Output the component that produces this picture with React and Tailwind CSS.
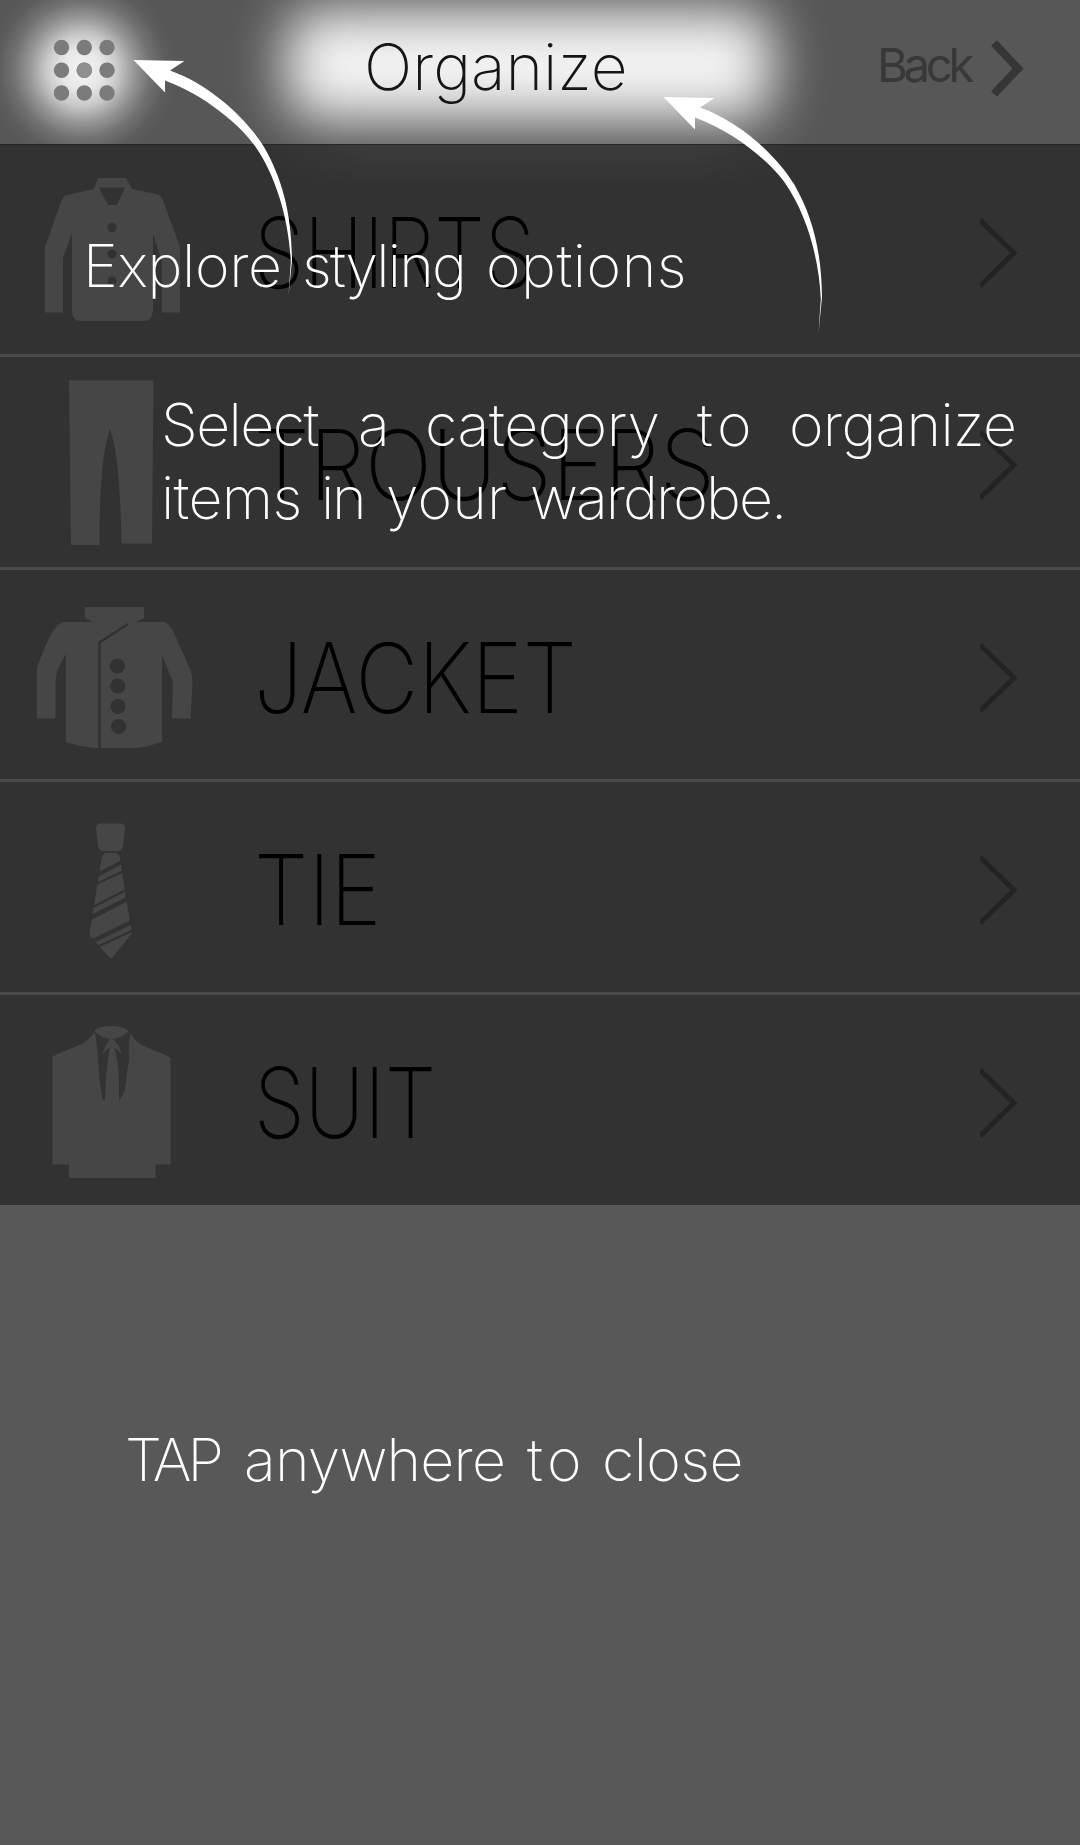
import React from 'react';

const Shirt = () => (
  <svg viewBox="0 145 220 209" className="h-[209px] w-[220px] shrink-0" fill="#464646">
    <path d="M98 178H126L132 189L156 194Q161 195 163 200L180 247V312.500H162V262L153 234V310Q152 321 145 321H80Q72 321 72 310V233L63 258V312.500H45V247L61 202Q63 196 67 195L94 189Z" />
    <path d="M99 187.500H125L117 205H108Z" fill="#323232" />
    <g fill="#323232">
      <circle cx="112" cy="227.500" r="4.500" />
      <circle cx="112" cy="254" r="4.500" />
      <circle cx="112" cy="281" r="4.500" />
    </g>
  </svg>
);

const Trousers = () => (
  <svg viewBox="0 357 220 209" className="h-[209px] w-[220px] shrink-0" fill="#464646">
    <path d="M69 380.500H153.500L152 543.500H121.500Q120 455 110 429Q99 460 99.500 545H71Z" />
  </svg>
);

const Jacket = () => (
  <svg viewBox="0 569 220 209" className="h-[209px] w-[220px] shrink-0" fill="#464646">
    <path d="M85 606H144V617L136 621H164Q169 622 174 632L190 668Q193 675 192.500 682L190.500 717.500H172L173 681L162 654V741Q150 745 137 747H98Q80 746 66 741V653Q56 668 55.500 680V717.500H37V667Q48 635 57 625Q61 621 65 621H93L85 617Z" />
    <path d="M99.500 748V641.500L128 623" fill="none" stroke="#323232" strokeWidth="2.600" />
    <g fill="#323232">
      <circle cx="117.300" cy="665" r="7.600" />
      <circle cx="117.800" cy="685" r="7.600" />
      <circle cx="118" cy="705.300" r="7.600" />
      <circle cx="118.500" cy="725.500" r="7.600" />
    </g>
  </svg>
);

const Tie = () => (
  <svg viewBox="0 782 220 209" className="h-[209px] w-[220px] shrink-0" fill="#464646">
    <path d="M100 823.500H121Q125.500 824 125 829L123 846Q122 851 118 851H103Q99 851 98 846L96 829Q96 824 100 823.500Z" />
    <path d="M106 853H115Q119 853 120 858L126 898L132 933L113 957Q111 959 109 957L90 936Q89 934 90 930L101 862Q102 854 106 853Z" />
    <g stroke="#323232" fill="none">
      <path d="M97 875L124 861" strokeWidth="4" />
      <path d="M94 885L125 870.500" strokeWidth="2.400" />
      <path d="M91 908L128 889" strokeWidth="2.400" />
      <path d="M89 918.500L130 897.500" strokeWidth="4.500" />
      <path d="M92 941.500L135 920.500" strokeWidth="4.200" />
      <path d="M95 948L135 929.500" strokeWidth="2.400" />
    </g>
  </svg>
);

const Suit = () => (
  <svg viewBox="0 995 220 209" className="h-[209px] w-[220px] shrink-0" fill="#464646">
    <path d="M94 1031Q98 1026 111 1026Q124 1026 128 1031L131 1034Q136 1044 151 1049Q162 1053 170.500 1057.500V1164.500H155.500V1178H69V1164.500H52.500V1056.500Q61 1052 72 1048Q90 1042 94 1031Z" />
    <g fill="#333333">
      <path d="M94.500 1031.500Q102 1038 111 1039Q105 1043 102.500 1055Q106 1048 110 1048Q106 1065 105 1100H102.500Q99 1080 98 1060Q97 1042 94.500 1031.500Z" />
      <path d="M128.500 1031.500Q122 1038 112 1039Q120 1044 121.500 1055Q118 1049 114.500 1048.500Q118 1058 119 1080V1100Q124 1096 125.500 1086Q127 1070 129 1060Q128 1042 130.500 1034Z" />
      <path d="M92.500 1029Q91 1033 92.500 1036L95 1031Z" />
    </g>
  </svg>
);

const rows = [
  { label: 'SHIRTS', Icon: Shirt, height: 'h-[212px]', fit: 'scale-x-[0.83]', rule: true },
  { label: 'TROUSERS', Icon: Trousers, height: 'h-[213px]', fit: 'scale-x-[0.916]', rule: true },
  { label: 'JACKET', Icon: Jacket, height: 'h-[212px]', fit: 'scale-x-[0.89]', rule: true },
  { label: 'TIE', Icon: Tie, height: 'h-[213px]', fit: 'scale-x-[0.893]', rule: true },
  { label: 'SUIT', Icon: Suit, height: 'h-[210px]', fit: 'scale-x-[0.842]', rule: false },
];

function Row({ label, Icon, height, fit, rule }) {
  return (
    <li className={`flex items-start ${height} ${rule ? 'border-b-[3px] border-[#4b4b4b]' : ''}`}>
      <Icon />
      <div className="flex h-[214px] flex-1 items-center pl-[34px]">
        <span className={`inline-block origin-left text-[97px] leading-[97px] text-black ${fit}`}>{label}</span>
      </div>
      <svg viewBox="0 0 100 209" className="h-[209px] w-[100px] shrink-0" fill="none" stroke="#232323" strokeWidth="5">
        <path d="M0 75L34 108L0 141" />
      </svg>
    </li>
  );
}

function Header() {
  return (
    <header className="relative flex h-[145px] items-center overflow-hidden border-b border-[#262626] bg-[#575757] pb-[11px]">
      <div className="absolute -left-7 -top-10 h-[220px] w-[220px] bg-[radial-gradient(circle,#f4f4f4_0px,#e8e8e8_20px,#c8c8c8_36px,#989898_52px,#727272_68px,#5c5c5c_84px,#57575700_96px)]" />
      <div className="absolute left-[286px] top-[10px] h-[110px] w-[486px] rounded-[30px] bg-[#f4f4f4] blur-[27px]" />
      <svg viewBox="0 0 62 62" className="relative ml-[53px] mt-[6px] h-[62px] w-[62px] shrink-0" fill="#7b7b7b">
        {[8.5, 31.3, 54].map((y) =>
          [8.5, 31.3, 54].map((x) => <circle key={`${x}-${y}`} cx={x} cy={y} r="7.700" />)
        )}
        <circle cx="31.300" cy="31.300" r="7.700" fill="#8f8f8f" />
      </svg>
      <h1 className="relative ml-[249px] w-[513px] text-[64px] font-extralight leading-[64px] tracking-[0.05px] text-[#151515]">
        Organize
      </h1>
      <button className="relative flex items-center text-[#383838]">
        <span className="-mt-1 w-[112px] text-left text-[47px] font-normal leading-[60px] tracking-[-4.2px]">Back</span>
        <svg viewBox="0 0 40 60" className="mt-1 h-[60px] w-[40px]" fill="none" stroke="#363636" strokeWidth="8">
          <path d="M5 4L29 29.500L5 55" />
        </svg>
      </button>
    </header>
  );
}

const Line = ({ className, children }) => (
  <p className={`flex h-[73px] whitespace-nowrap ${className}`}>{children}</p>
);

const Arrow = ({ className }) => (
  <svg viewBox="130 56 170 244" className={`absolute h-[244px] w-[170px] ${className}`} fill="#ffffff">
    <path d="M133.500 60L184.500 61L170 70.500C213 86 248 121 264 147C283 180 291.500 215 292 260L288.500 296L290.800 262C289 220 276 176 255 146C241 126 205 95 165 80.500V92.500Z" />
  </svg>
);

function Coach() {
  return (
    <div className="absolute inset-0 flex flex-col pt-[229px] text-[59px] font-extralight leading-[73px] text-white">
      <Arrow className="left-[130px] top-[56px]" />
      <Arrow className="left-[660px] top-[93px]" />
      <Line className="pl-[83px]">
        <span className="w-[219px] tracking-[-0.35px]">Explore</span>
        <span className="w-[184px] tracking-[-1.77px]">styling</span>
        <span className="tracking-[0.5px]">options</span>
      </Line>
      <Line className="mt-[86px] pl-[161px]">
        <span className="w-[197px] tracking-[-1.53px]">Select</span>
        <span className="w-[67px]">a</span>
        <span className="w-[272px] tracking-[-0.3px]">category</span>
        <span className="w-[92px] tracking-[4.5px]">to</span>
        <span className="tracking-[-0.7px]">organize</span>
      </Line>
      <Line className="pl-[161px]">
        <span className="w-[160px] tracking-[-0.63px]">items</span>
        <span className="w-[65px] tracking-[-2.25px]">in</span>
        <span className="w-[144px] tracking-[0.18px]">your</span>
        <span className="tracking-[-1.92px]">wardrobe.</span>
      </Line>
      <Line className="mt-[889px] pl-[125px]">
        <span className="w-[119px] tracking-[-4.07px]">TAP</span>
        <span className="w-[283px] tracking-[-0.77px]">anywhere</span>
        <span className="w-[75px] tracking-[4.5px]">to</span>
        <span className="tracking-[-0.6px]">close</span>
      </Line>
    </div>
  );
}

export default function App() {
  return (
    <main className="relative h-[1845px] w-[1080px] overflow-hidden bg-[#585858] font-['Inter',sans-serif] font-extralight">
      <Header />
      <ul className="bg-[#323232]">
        {rows.map((row) => (
          <Row key={row.label} {...row} />
        ))}
      </ul>
      <div className="absolute left-[260px] top-[145px] h-[45px] w-[540px] bg-linear-to-b from-white/5 to-transparent mask-x-from-80%" />
      <Coach />
    </main>
  );
}
